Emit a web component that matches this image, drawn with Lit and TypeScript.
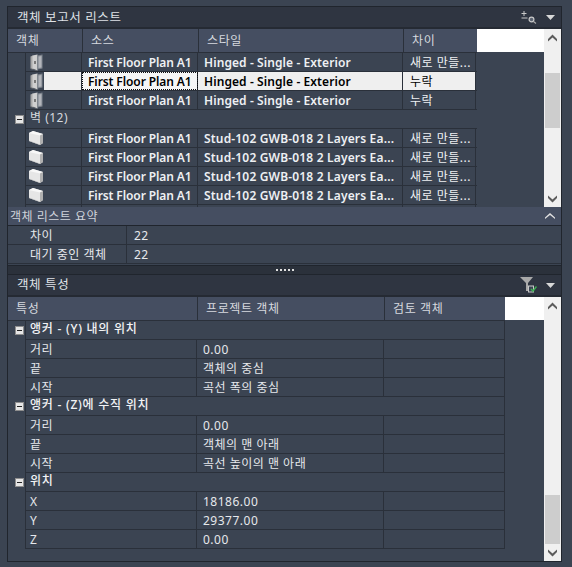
import { LitElement, html, css, svg } from "lit";
import { customElement } from "lit/decorators.js";

const door = html`<svg class="ico" width="13" height="17" viewBox="0 0 13 17">
  <path d="M0.5 2.5 L3 1.5 L3 15 L0.5 14.5 Z" fill="#a8a8a8"/>
  <path d="M2.5 1.5 L7.5 0.5 L7.5 16.5 L2.5 14.5 Z" fill="#cfcfcf"/>
  <path d="M7.5 1.5 L12.5 0.5 L12.5 14.5 L7.5 15.5 Z" fill="#7d838c"/>
  <path d="M8.5 2.5 L11.5 2 L11.5 13.5 L8.5 14 Z" fill="#b3b6bb"/>
  <rect x="4" y="7" width="2" height="3" fill="#7a7a7a"/>
  <path d="M0.5 14.5 L7.5 16.5 L7.5 17 L0.5 15 Z" fill="#7c7c7c"/>
</svg>`;

const wall = html`<svg class="ico" width="16" height="16" viewBox="0 0 16 16">
  <path d="M1 3 L5 1 L15 4 L15 13 L12 15 L1 11 Z" fill="#e6e6e6"/>
  <path d="M1 3 L5 1 L15 4 L12 5.5 Z" fill="#f8f8f8"/>
  <path d="M12 5.5 L15 4 L15 13 L12 15 Z" fill="#b0b0b0"/>
  <path d="M1 10.5 L12 14.5 L12 15 L1 11 Z" fill="#c4c4c4"/>
</svg>`;

const up = svg`<path d="M1 6 L5.5 1.5 L10 6 L10 8.5 L5.5 4.5 L1 8.5 Z" fill="#5b5b5b"/>`;
const down = svg`<path d="M1 1.5 L5.5 5.5 L10 1.5 L10 4 L5.5 8.5 L1 4 Z" fill="#5b5b5b"/>`;

const doors = [
  ["First Floor Plan A1", "Hinged - Single - Exterior", "새로 만들..."],
  ["First Floor Plan A1", "Hinged - Single - Exterior", "누락"],
  ["First Floor Plan A1", "Hinged - Single - Exterior", "누락"],
];
const wallRow = ["First Floor Plan A1", "Stud-102 GWB-018 2 Layers Ea...", "새로 만들..."];

type Prop = { group: string } | { k: string; v: string };
const props: Prop[] = [
  { group: "앵커 - (Y) 내의 위치" },
  { k: "거리", v: "0.00" },
  { k: "끝", v: "객체의 중심" },
  { k: "시작", v: "곡선 폭의 중심" },
  { group: "앵커 - (Z)에 수직 위치" },
  { k: "거리", v: "0.00" },
  { k: "끝", v: "객체의 맨 아래" },
  { k: "시작", v: "곡선 높이의 맨 아래" },
  { group: "위치" },
  { k: "X", v: "18186.00" },
  { k: "Y", v: "29377.00" },
  { k: "Z", v: "0.00" },
];

@customElement("app-root")
export class AppRoot extends LitElement {
  static styles = css`
    :host {
      display: block;
      width: 572px;
      height: 567px;
      background: #3b4452;
      padding: 6px 10px 5px 7px;
      box-sizing: border-box;
      font-family: "Noto Sans", "Noto Sans CJK KR", sans-serif;
      font-size: 12px;
      color: #e6e8ec;
      overflow: hidden;
    }
    * { box-sizing: border-box; }
    .panel {
      width: 555px;
      height: 556px;
      border: 1px solid #20252d;
      display: flex;
      flex-direction: column;
    }
    .title {
      flex: none;
      height: 22px;
      background: #2f3541;
      border-bottom: 2px solid #252a33;
      display: flex;
      align-items: center;
      padding: 0 6px 0 9px;
      letter-spacing: 0.6px;
      font-size: 12.5px;
      color: #dfe2e7;
    }
    .title .t { flex: 1; position: relative; top: -1px; }
    .title.second .t { top: -2px; }
    .title svg { flex: none; display: block; }
    .title .menu { margin-left: 9px; }
    .body { flex: none; display: flex; }
    .b1 { height: 178px; }
    .b2 { height: 264px; }
    .tbl { flex: 1; min-width: 0; overflow: hidden; }
    .hdr { display: flex; height: 24px; }
    .hdr .h {
      flex: none;
      height: 24px;
      background: #454e61;
      border-right: 1px solid #2a303a;
      border-bottom: 1px solid #2a303a;
      padding-top: 2px;
      padding-left: 8px;
      letter-spacing: 0.6px;
      color: #d6d9df;
      white-space: nowrap;
    }
    .hdr .h.last { border-right: 0; }
    .hdr .fill { flex: 1; height: 23px; background: #fff; }
    .row { display: flex; height: 19px; }
    .gutter { flex: none; width: 17px; display: flex; align-items: center; justify-content: flex-end; padding-right: 1px; }
    .minus {
      width: 9px; height: 9px;
      background: #e6e6e6;
      border: 1px solid #8e8e8e;
      display: flex; align-items: center; justify-content: center;
    }
    .minus i { display: block; width: 5px; height: 1px; background: #222; }
    .cells {
      flex: none;
      display: grid;
      border-left: 1px solid #2a303a;
      border-bottom: 1px solid #2a303a;
      border-right: 1px solid #2a303a;
    }
    .t1 .cells { width: 452px; grid-template-columns: 56px 116px 205px 73px; border-right: 0; }
    .t2 .cells { width: 480px; grid-template-columns: 171px 187px 120px; }
    .c {
      height: 18px;
      line-height: 19px;
      padding-left: 6px;
      border-right: 1px solid #2a303a;
      white-space: nowrap;
      overflow: hidden;
    }
    .t1 .c { font-weight: 600; color: #eef0f3; }
    .t1 .c.src { letter-spacing: -0.1px; }
    .t1 .c.sty { letter-spacing: 0.09px; }
    .t1 .c.sty.long { letter-spacing: 0.17px; }
    .t1 .c.dif { font-weight: 400; letter-spacing: 0.5px; padding-left: 7px; }
    .c.g { grid-column: 1 / -1; border-right: 0; padding-left: 4px; }
    .t2 .c:last-child { border-right: 0; }
    .t2 .c.k { padding-left: 4px; letter-spacing: 0.5px; }
    .t2 .c.v { letter-spacing: 0.5px; }
    .t2 .c.g { font-weight: 500; color: #f2f3f5; letter-spacing: 0.75px; line-height: 16px; }
    .t1 .c.g { font-weight: 400; letter-spacing: 0.5px; color: #d6d9df; line-height: 15px; }
    .c.icon { padding-left: 4px; display: flex; align-items: center; }
    .c.icon.wall { padding-left: 2px; }
    .ico { display: block; flex: none; }
    .sel .c { background: #efefef; color: #000; }
    .sel .c.icon { background: linear-gradient(to right, #3b4452 18px, #efefef 18px); }
    .sel .c.focus { outline: 1px dotted #111; outline-offset: -1px; background: #f6f6f6; }
    .sb {
      flex: none;
      width: 17px;
      background: #f0f0f0;
      display: flex;
      flex-direction: column;
      align-items: center;
    }
    .sb svg { flex: none; display: block; }
    .sb .btn { flex: none; height: 17px; display: flex; align-items: center; justify-content: center; }
    .sb .space { flex: none; }
    .sb .thumb { flex: none; width: 15px; background: #cdcdcd; }
    .sb .grow { flex: 1; }
    .summary { flex: none; }
    .s-h {
      height: 19px;
      background: #454e61;
      border-bottom: 1px solid #20252d;
      display: flex;
      align-items: center;
      justify-content: space-between;
      padding: 0 6px 0 2px;
      letter-spacing: 0.5px;
      color: #cfd3da;
    }
    .s-r {
      height: 19px;
      display: grid;
      grid-template-columns: 118px 1fr;
      border-bottom: 1px solid #2a303a;
    }
    .s-r > div { padding-left: 22px; line-height: 19px; letter-spacing: 0.5px; overflow: hidden; white-space: nowrap; height: 18px; }
    .s-r > div + div { padding-left: 7px; border-left: 1px solid #2a303a; }
    .splitter {
      flex: none;
      height: 10px;
      margin-top: 1px;
      background: #2b313b;
      border-top: 1px solid #20252d;
      border-bottom: 1px solid #20252d;
      display: flex;
      align-items: center;
      justify-content: center;
      gap: 2px;
    }
    .splitter i { display: block; width: 2px; height: 2px; background: #e0e0e0; }
  `;

  private bar(thumbTop: number, thumbH: number) {
    return html`<div class="sb">
      <div class="btn"><svg width="11" height="10" viewBox="0 0 11 10">${up}</svg></div>
      <div class="space" style="height:${thumbTop}px"></div>
      <div class="thumb" style="height:${thumbH}px"></div>
      <div class="grow"></div>
      <div class="btn"><svg width="11" height="10" viewBox="0 0 11 10">${down}</svg></div>
    </div>`;
  }

  render() {
    return html`<div class="panel">
      <div class="title">
        <span class="t">객체 보고서 리스트</span>
        <svg width="16" height="14" viewBox="0 0 16 14">
          <path d="M3 1 V6 M0.5 3.5 H5.5 M0.5 8 H6.5" stroke="#c9c9c9" stroke-width="1" fill="none"/>
          <circle cx="10.5" cy="9.5" r="2.4" fill="#5a6270" stroke="#c9c9c9" stroke-width="1.2"/>
          <path d="M12.5 11.5 L15 13.5" stroke="#aaa" stroke-width="1.2"/>
        </svg>
        <svg class="menu" width="9" height="5" viewBox="0 0 9 5"><path d="M0 0 H9 L4.5 5 Z" fill="#d8d8d8"/></svg>
      </div>
      <div class="body b1">
        <div class="tbl t1">
          <div class="hdr">
            <div class="h" style="width:75px">객체</div>
            <div class="h" style="width:116px">소스</div>
            <div class="h" style="width:205px">스타일</div>
            <div class="h last" style="width:73px">차이</div>
            <div class="fill"></div>
          </div>
          ${doors.map(
            (r, i) => html`<div class="row ${i === 1 ? "sel" : ""}">
              <div class="gutter"></div>
              <div class="cells">
                <div class="c icon">${door}</div>
                <div class="c src ${i === 1 ? "focus" : ""}">${r[0]}</div>
                <div class="c sty">${r[1]}</div>
                <div class="c dif">${r[2]}</div>
              </div>
            </div>`
          )}
          <div class="row">
            <div class="gutter"><span class="minus"><i></i></span></div>
            <div class="cells"><div class="c g">벽 (12)</div></div>
          </div>
          ${[0, 1, 2, 3].map(
            () => html`<div class="row">
              <div class="gutter"></div>
              <div class="cells">
                <div class="c icon wall">${wall}</div>
                <div class="c src">${wallRow[0]}</div>
                <div class="c sty long">${wallRow[1]}</div>
                <div class="c dif">${wallRow[2]}</div>
              </div>
            </div>`
          )}
          <div class="row">
            <div class="gutter"></div>
            <div class="cells">
              <div class="c icon wall">${wall}</div>
              <div class="c"></div><div class="c"></div><div class="c"></div>
            </div>
          </div>
        </div>
        ${this.bar(27, 55)}
      </div>
      <div class="summary">
        <div class="s-h">
          <span>객체 리스트 요약</span>
          <svg width="10" height="6" viewBox="0 0 10 6"><path d="M0 4.5 L5 0 L10 4.5 L10 6 L5 2 L0 6 Z" fill="#e2e2e2"/></svg>
        </div>
        <div class="s-r"><div>차이</div><div>22</div></div>
        <div class="s-r"><div>대기 중인 객체</div><div>22</div></div>
      </div>
      <div class="splitter"><i></i><i></i><i></i><i></i><i></i></div>
      <div class="title second">
        <span class="t">객체 특성</span>
        <svg width="17" height="16" viewBox="0 0 17 16">
          <path d="M0 0 H13 L8 6 V14 L6 14 V6 Z" fill="#a9a9a9"/>
          <rect x="8.5" y="9" width="5" height="6" fill="#3b4452" stroke="#c9c9c9"/>
          <path d="M11 12 L13 14 L16.5 9.5" stroke="#3fae55" stroke-width="1.5" fill="none"/>
        </svg>
        <svg class="menu" width="9" height="5" viewBox="0 0 9 5"><path d="M0 0 H9 L4.5 5 Z" fill="#d8d8d8"/></svg>
      </div>
      <div class="body b2">
        <div class="tbl t2">
          <div class="hdr">
            <div class="h" style="width:190px">특성</div>
            <div class="h" style="width:187px">프로젝트 객체</div>
            <div class="h last" style="width:120px">검토 객체</div>
            <div class="fill"></div>
          </div>
          ${props.map((p) =>
            "group" in p
              ? html`<div class="row">
                  <div class="gutter"><span class="minus"><i></i></span></div>
                  <div class="cells"><div class="c g">${p.group}</div></div>
                </div>`
              : html`<div class="row">
                  <div class="gutter"></div>
                  <div class="cells">
                    <div class="c k">${p.k}</div>
                    <div class="c v">${p.v}</div>
                    <div class="c"></div>
                  </div>
                </div>`
          )}
        </div>
        ${this.bar(181, 49)}
      </div>
    </div>`;
  }
}
